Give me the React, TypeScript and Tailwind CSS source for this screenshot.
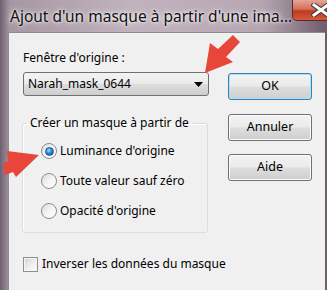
import React from 'react'

const font = { fontFamily: '"Noto Sans", "Open Sans", Arial, sans-serif' }

function Radio({ checked, label }: { checked?: boolean; label: string }) {
  return (
    <div className="flex items-center h-[30px]">
      <span className="w-[16px] h-[16px] rounded-full border border-[#8a8a8a] bg-gradient-to-br from-[#d9d9d9] via-[#f4f4f4] to-[#ffffff] flex items-center justify-center shadow-[inset_0_0_1px_#fff]">
        {checked && (
          <span className="w-[9px] h-[9px] rounded-full bg-[radial-gradient(circle_at_40%_35%,#9fe0ff_0%,#2a8ad0_45%,#0b4f8c_100%)] border border-[#1c5a8a]" />
        )}
      </span>
      <span className="ml-[3px] text-[12px] text-black whitespace-nowrap">{label}</span>
    </div>
  )
}

function WinButton({ children, focused }: { children: React.ReactNode; focused?: boolean }) {
  return (
    <button
      className={
        'w-[84px] h-[27px] rounded-[3px] border text-[12.5px] text-black bg-[linear-gradient(#f3f3f3_0%,#ebebeb_48%,#dddddd_52%,#cfcfcf_100%)] ' +
        (focused
          ? 'border-[#3c7fb1] shadow-[inset_0_0_0_1px_#a8e0f8]'
          : 'border-[#707070] shadow-[inset_0_0_0_1px_#fcfcfc]')
      }
    >
      {children}
    </button>
  )
}

export default function App() {
  return (
    <div
      className="relative w-[327px] h-[290px] overflow-hidden bg-[linear-gradient(90deg,#6d6070_0%,#a797a3_3%,#c1b3bd_40%,#b7a6b2_80%,#6e5c6c_100%)]"
      style={font}
    >
      {/* title bar */}
      <div className="h-[32px] flex items-start">
        <div className="pl-[10px] pt-[5px] text-[15.5px] text-[#111] whitespace-nowrap [text-shadow:0_0_6px_#ffffff,0_0_3px_#ffffff]">
          Ajout d'un masque à partir d'une ima...
        </div>
        <div className="ml-auto mr-[2px] w-[58px] h-[21px] shrink-0 rounded-b-[5px] border border-t-0 border-[#5a2a2a] bg-[linear-gradient(#e5a596_0%,#d4705a_45%,#c0391f_55%,#d45a3c_100%)] flex items-center justify-center">
          <svg width="20" height="14" viewBox="0 0 20 14">
            <path d="M3 2 L17 12 M17 2 L3 12" stroke="#3a3a3a" strokeWidth="5" strokeLinecap="square" />
            <path d="M3 2 L17 12 M17 2 L3 12" stroke="#ffffff" strokeWidth="3" strokeLinecap="square" />
          </svg>
        </div>
      </div>

      {/* client area */}
      <div className="ml-[8px] mr-[2px] h-[258px] bg-[#f0f0f0] border-t border-l border-[#8e8e8e] flex">
        <div className="ml-[14px] w-[186px] flex flex-col">
          <div className="mt-[17px] text-[12px] leading-[16px] text-black">Fenêtre d'origine :</div>
          <div className="mt-[6px] h-[24px] w-[186px] rounded-[3px] border border-[#707070] bg-[linear-gradient(#f3f3f3_0%,#ebebeb_48%,#dddddd_52%,#cfcfcf_100%)] flex items-center pl-[4px] pr-[5px]">
            <span className="text-[12px] text-black">Narah_mask_0644</span>
            <svg className="ml-auto" width="9" height="5" viewBox="0 0 9 5">
              <path d="M0 0 H9 L4.5 5 Z" fill="#000" />
            </svg>
          </div>

          <fieldset className="mt-[19px] -ml-[1px] w-[186px] h-[118px] border border-[#d5dfe5] rounded-[3px] shadow-[inset_1px_1px_0_#fff]">
            <legend className="ml-[4px] px-[3px] text-[12px] leading-[16px] text-black whitespace-nowrap">Créer un masque à partir de</legend>
            <div className="pl-[18px] pt-[5px]">
              <Radio checked label="Luminance d'origine" />
              <Radio label="Toute valeur sauf zéro" />
              <Radio label="Opacité d'origine" />
            </div>
          </fieldset>

          <div className="mt-[22px] flex items-center">
            <span className="w-[15px] h-[15px] shrink-0 border border-[#8e8f8f] bg-[linear-gradient(135deg,#cfcfcf,#f2f2f2_60%,#fafafa)] shadow-[inset_0_0_0_1px_#f4f4f4]" />
            <span className="ml-[4px] text-[12px] text-black whitespace-nowrap">Inverser les données du masque</span>
          </div>
        </div>

        <div className="ml-[19px] flex flex-col">
          <div className="mt-[39px]">
            <WinButton focused>OK</WinButton>
          </div>
          <div className="mt-[13px]">
            <WinButton>Annuler</WinButton>
          </div>
          <div className="mt-[12px]">
            <WinButton>Aide</WinButton>
          </div>
        </div>
      </div>

      {/* annotation arrows */}
      <svg className="absolute left-0 top-0 pointer-events-none" width="327" height="290" viewBox="0 0 327 290">
        <polygon points="205,73 210,43 218,49 233,35 240,42 226,57 233,62" fill="#e8463b" />
        <polygon points="39,155 7,151 8,161 3,164 5,175 13,172 16,177" fill="#e8463b" />
      </svg>
    </div>
  )
}
